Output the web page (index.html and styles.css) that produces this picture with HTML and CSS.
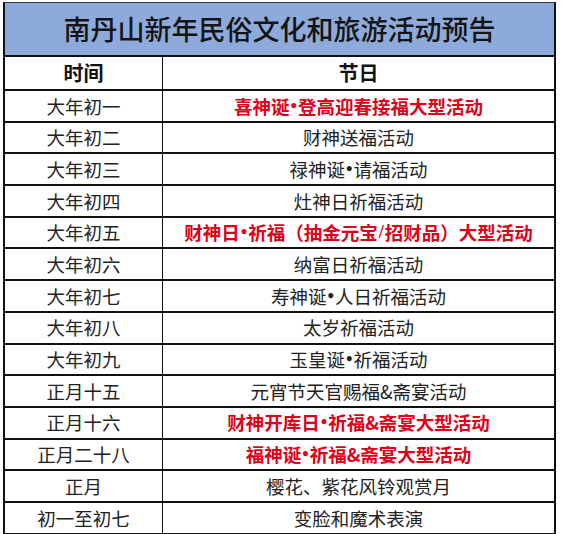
FILE: index.html
```html
<!DOCTYPE html>
<html lang="zh-CN">
<head>
<meta charset="utf-8">
<link rel="stylesheet" href="styles.css">
</head>
<body>
<div class="sheet">
  <div class="title">南丹山新年民俗文化和旅游活动预告</div>
  <div class="row head"><div class="c1">时间</div><div class="c2">节日</div></div>
  <div class="row"><div class="c1">大年初一</div><div class="c2 red">喜神诞<span class="dot">•</span>登高迎春接福大型活动</div></div>
  <div class="row"><div class="c1">大年初二</div><div class="c2">财神送福活动</div></div>
  <div class="row"><div class="c1">大年初三</div><div class="c2">禄神诞<span class="dot">•</span>请福活动</div></div>
  <div class="row"><div class="c1">大年初四</div><div class="c2">灶神日祈福活动</div></div>
  <div class="row"><div class="c1">大年初五</div><div class="c2 red">财神日<span class="dot">•</span>祈福（抽金元宝<span class="slash">/</span>招财品）大型活动</div></div>
  <div class="row"><div class="c1">大年初六</div><div class="c2">纳富日祈福活动</div></div>
  <div class="row"><div class="c1">大年初七</div><div class="c2">寿神诞<span class="dot">•</span>人日祈福活动</div></div>
  <div class="row"><div class="c1">大年初八</div><div class="c2">太岁祈福活动</div></div>
  <div class="row"><div class="c1">大年初九</div><div class="c2">玉皇诞<span class="dot">•</span>祈福活动</div></div>
  <div class="row"><div class="c1">正月十五</div><div class="c2">元宵节天官赐福&amp;斋宴活动</div></div>
  <div class="row"><div class="c1">正月十六</div><div class="c2 red">财神开库日<span class="dot">•</span>祈福&amp;斋宴大型活动</div></div>
  <div class="row"><div class="c1">正月二十八</div><div class="c2 red">福神诞<span class="dot">•</span>祈福&amp;斋宴大型活动</div></div>
  <div class="row"><div class="c1">正月</div><div class="c2">樱花、紫花风铃观赏月</div></div>
  <div class="row"><div class="c1">初一至初七</div><div class="c2">变脸和魔术表演</div></div>
</div>
</body>
</html>
```

FILE: styles.css
```css
html, body {
  margin: 0;
  padding: 0;
  background: #ffffff;
}
body {
  font-family: "Noto Sans CJK SC", "Noto Sans", sans-serif;
  color: #222;
  overflow: hidden;
}
.sheet {
  margin: 2px 0 0 3px;
  width: 553px;
  box-sizing: border-box;
  border-left: 2px solid #111;
  border-right: 2px solid #111;
  border-top: 1px solid #333;
}
.title {
  height: 54px;
  box-sizing: border-box;
  background: #8eaadb;
  border-bottom: 2px solid #111;
  display: flex;
  align-items: center;
  justify-content: center;
  font-size: 27px;
  font-weight: 500;
  color: #141414;
  padding-bottom: 2px;
}
.row {
  display: grid;
  grid-template-columns: 158px 1fr;
  height: 31.7px;
  box-sizing: border-box;
  border-bottom: 2px solid #111;
  font-size: 18.5px;
}
.row.head {
  height: 34px;
  font-size: 20px;
  font-weight: 700;
  color: #111;
}
.c1, .c2 {
  display: flex;
  align-items: center;
  justify-content: center;
  white-space: nowrap;
  line-height: 1;
}
.c1 {
  border-right: 1px solid #111;
}
.red {
  color: #df0019;
  font-weight: 700;
}
.dot, .slash {
  font-family: "Liberation Serif", serif;
  font-weight: 700;
  padding: 0 1px;
}
```
